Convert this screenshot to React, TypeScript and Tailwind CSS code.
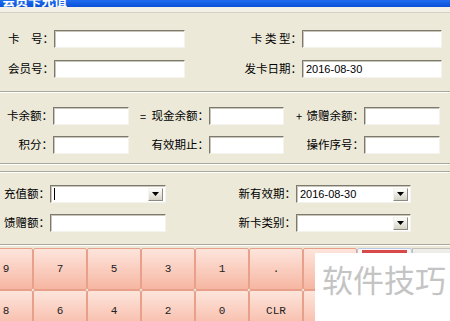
import React from "react"

const cjk = { fontFamily: '"Noto Sans CJK SC", "Noto Sans", sans-serif' }

function Field({ w, value }: { w: string; value?: string }) {
  return (
    <div
      className={`${w} h-[18px] bg-white border border-t-[#7c7a70] border-l-[#7c7a70] border-r-[#f4f3ee] border-b-[#f4f3ee] shadow-[inset_1px_1px_0_#c9c6b8] flex items-center px-[3px] text-[11px] text-black`}
      style={{ fontFamily: '"Liberation Sans", sans-serif' }}
    >
      {value}
    </div>
  )
}

function Combo({ w, value, caret }: { w: string; value?: string; caret?: boolean }) {
  return (
    <div
      className={`${w} h-[18px] bg-white border border-t-[#7c7a70] border-l-[#7c7a70] border-r-[#f4f3ee] border-b-[#f4f3ee] shadow-[inset_1px_1px_0_#c9c6b8] flex items-center pl-[3px] pr-[2px] text-[11px] text-black`}
      style={{ fontFamily: '"Liberation Sans", sans-serif' }}
    >
      <span className="flex-1 flex items-center">
        {caret && <span className="w-px h-[12px] bg-black" />}
        {value}
      </span>
      <span className="w-[15px] h-[13px] flex items-center justify-center bg-gradient-to-b from-[#fdfdfb] to-[#d6d3c6] border border-t-[#f4f3ee] border-l-[#f4f3ee] border-r-[#8d8b80] border-b-[#8d8b80]">
        <svg width="7" height="4" viewBox="0 0 7 4">
          <path d="M0 0h7L3.5 4z" fill="#000" />
        </svg>
      </span>
    </div>
  )
}

function Label({ w, children, left }: { w: string; children: React.ReactNode; left?: boolean }) {
  return (
    <div
      className={`${w} shrink-0 flex items-center ${left ? "justify-start" : "justify-end"} text-[11.5px] text-black whitespace-nowrap`}
      style={cjk}
    >
      {children}
    </div>
  )
}

function Groove() {
  return (
    <div>
      <div className="h-px bg-[#aca899]" />
      <div className="h-px bg-white" />
    </div>
  )
}

function Key({ label }: { label: string }) {
  return (
    <div
      className="w-[54px] h-[42px] shrink-0 border border-[#e9a08a] rounded-[2px] bg-gradient-to-b from-[#fde5dc] to-[#f6b6a2] flex items-center justify-center text-[11px] text-[#222]"
      style={{ fontFamily: '"Liberation Mono", monospace' }}
    >
      {label}
    </div>
  )
}

export default function App() {
  const row1 = ["9", "7", "5", "3", "1", ".", ""]
  const row2 = ["8", "6", "4", "2", "0", "CLR", ""]

  return (
    <div className="relative w-[450px] h-[321px] overflow-hidden bg-[#ece9d8]">
      {/* title bar */}
      <div className="h-[7px] overflow-hidden bg-gradient-to-b from-[#1f6cf0] to-[#0a50d8]">
        <div className="-mt-[10px] pl-[2px] text-[13px] font-bold text-white whitespace-nowrap" style={cjk}>
          会员卡充值
        </div>
      </div>
      <div className="h-[6px] bg-[#f2f0e7] border-b border-[#d4d0c0]" />

      {/* card info */}
      <div className="pt-[17px] pb-[13px] flex flex-col gap-[12px]">
        <div className="flex">
          <Label w="w-[54px]" left>
            <span className="pl-[8px]">卡　号：</span>
          </Label>
          <Field w="w-[131px]" />
          <Label w="w-[117px]">卡 类 型：</Label>
          <Field w="w-[140px]" />
        </div>
        <div className="flex">
          <Label w="w-[54px]" left>
            <span className="pl-[8px]">会员号：</span>
          </Label>
          <Field w="w-[131px]" />
          <Label w="w-[117px]">发卡日期：</Label>
          <Field w="w-[140px]" value="2016-08-30" />
        </div>
      </div>
      <Groove />

      {/* balances */}
      <div className="pt-[14px] pb-[9px] flex flex-col gap-[11px]">
        <div className="flex">
          <Label w="w-[53px]">卡余额：</Label>
          <Field w="w-[76px]" />
          <Label w="w-[80px]">
            <span className="mr-auto pl-[11px] text-[11px]">=</span>现金余额：
          </Label>
          <Field w="w-[75px]" />
          <Label w="w-[80px]">
            <span className="mr-auto pl-[12px] text-[11px]">+</span>馈赠余额：
          </Label>
          <Field w="w-[76px]" />
        </div>
        <div className="flex">
          <Label w="w-[53px]">积分：</Label>
          <Field w="w-[76px]" />
          <Label w="w-[80px]">有效期止：</Label>
          <Field w="w-[75px]" />
          <Label w="w-[80px]">操作序号：</Label>
          <Field w="w-[76px]" />
        </div>
      </div>
      <Groove />
      <div className="h-[6px]" />
      <Groove />

      {/* recharge */}
      <div className="pt-[12px] pb-[12px] flex flex-col gap-[11px]">
        <div className="flex">
          <Label w="w-[50px]">充值额：</Label>
          <Combo w="w-[116px]" caret />
          <Label w="w-[130px]">新有效期：</Label>
          <Combo w="w-[115px]" value="2016-08-30" />
        </div>
        <div className="flex">
          <Label w="w-[50px]">馈赠额：</Label>
          <Field w="w-[116px]" />
          <Label w="w-[130px]">新卡类别：</Label>
          <Combo w="w-[115px]" />
        </div>
      </div>
      <Groove />

      {/* keypad */}
      <div className="pt-[2px] flex flex-col">
        <div className="flex ml-[-21px]">
          {row1.map((k, i) => (
            <Key key={i} label={k} />
          ))}
          <div className="w-[55px] h-[42px] shrink-0 border border-[#b9c8e6] rounded-[2px] bg-[#f7f6f2] px-[4px] pt-[1px]">
            <div className="h-[3px] bg-[#d84a4a]" />
          </div>
          <div className="w-[40px] h-[42px] shrink-0 border border-[#c4c2b8] bg-gradient-to-b from-[#eeeeea] to-[#d8d6ce]" />
        </div>
        <div className="flex ml-[-21px]">
          {row2.map((k, i) => (
            <Key key={i} label={k} />
          ))}
        </div>
      </div>

      {/* watermark */}
      <div className="absolute left-[315px] top-[253px] w-[135px] h-[68px] bg-white flex items-start pt-[10px] pl-[7px]">
        <span className="text-[31px] leading-none text-[#c4c4c4] whitespace-nowrap" style={cjk}>
          软件技巧
        </span>
      </div>
    </div>
  )
}
